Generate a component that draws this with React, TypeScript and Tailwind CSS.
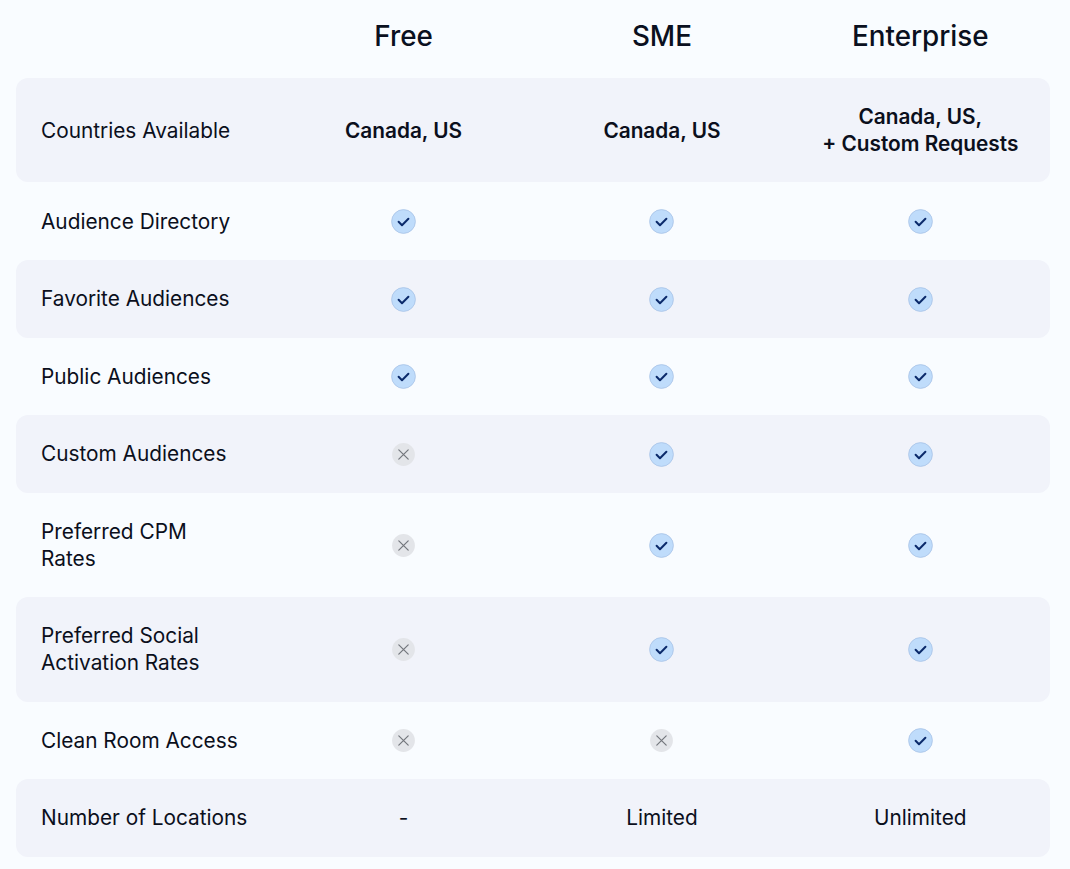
const Check = () => (
  <svg className="mt-[1px]" width="25" height="25" viewBox="0 0 25 25" aria-hidden="true">
    <circle cx="12.5" cy="12.5" r="11.9" fill="#bfdcfb" stroke="#a3bfe4" strokeWidth="0.7" />
    <path d="M7.6 12.8 L11 16.2 L17.4 9.8" fill="none" stroke="#0b2a6b" strokeWidth="2" strokeLinecap="round" strokeLinejoin="round" />
  </svg>
);

const Cross = () => (
  <svg className="mt-[1px]" width="23" height="23" viewBox="0 0 23 23" aria-hidden="true">
    <circle cx="11.5" cy="11.5" r="11.4" fill="#e3e5e9" />
    <path d="M6.8 6.8 L16.2 16.2 M16.2 6.8 L6.8 16.2" fill="none" stroke="#73767c" strokeWidth="1.2" strokeLinecap="round" />
  </svg>
);

type Cell = "y" | "n" | string;

const rows: { label: string[]; cells: Cell[]; h: string; shaded: boolean; bold?: boolean }[] = [
  { label: ["Countries Available"], cells: ["Canada, US", "Canada, US", "Canada, US,\n+ Custom Requests"], h: "h-[104px] mb-[0.5px]", shaded: true, bold: true },
  { label: ["Audience Directory"], cells: ["y", "y", "y"], h: "h-[77.5px]", shaded: false },
  { label: ["Favorite Audiences"], cells: ["y", "y", "y"], h: "h-[77.5px]", shaded: true },
  { label: ["Public Audiences"], cells: ["y", "y", "y"], h: "h-[77.5px]", shaded: false },
  { label: ["Custom Audiences"], cells: ["n", "y", "y"], h: "h-[77.5px]", shaded: true },
  { label: ["Preferred CPM", "Rates"], cells: ["n", "y", "y"], h: "h-[104.5px]", shaded: false },
  { label: ["Preferred Social", "Activation Rates"], cells: ["n", "y", "y"], h: "h-[104.5px]", shaded: true },
  { label: ["Clean Room Access"], cells: ["n", "n", "y"], h: "h-[77.5px]", shaded: false },
  { label: ["Number of Locations"], cells: ["-", "Limited", "Unlimited"], h: "h-[77.5px]", shaded: true },
];

export default function App() {
  return (
    <div className="min-h-[869px] bg-[#f9fcff] pl-4 pr-[20.5px] font-['Inter',sans-serif] text-[#0b0f1c]">
      <div className="grid h-[78px] grid-cols-4 pb-[6px] text-center text-[27.8px] font-medium leading-[72px] text-[#0a1020]">
        <div />
        <div>Free</div>
        <div>SME</div>
        <div>Enterprise</div>
      </div>
      {rows.map((r) => (
        <div
          key={r.label[0]}
          className={`grid grid-cols-4 items-center rounded-[12px] text-[20.8px] font-normal leading-[27px] ${r.h} ${r.shaded ? "bg-[#f1f3fa]" : ""}`}
        >
          <div className="pl-[25px]">
            {r.label.map((l) => (
              <div key={l}>{l}</div>
            ))}
          </div>
          {r.cells.map((c, i) => (
            <div key={i} className="flex flex-col items-center justify-center text-center">
              {c === "y" ? (
                <Check />
              ) : c === "n" ? (
                <Cross />
              ) : (
                c.split("\n").map((t) => (
                  <div key={t} className={r.bold ? "font-semibold" : ""}>
                    {t}
                  </div>
                ))
              )}
            </div>
          ))}
        </div>
      ))}
    </div>
  );
}
